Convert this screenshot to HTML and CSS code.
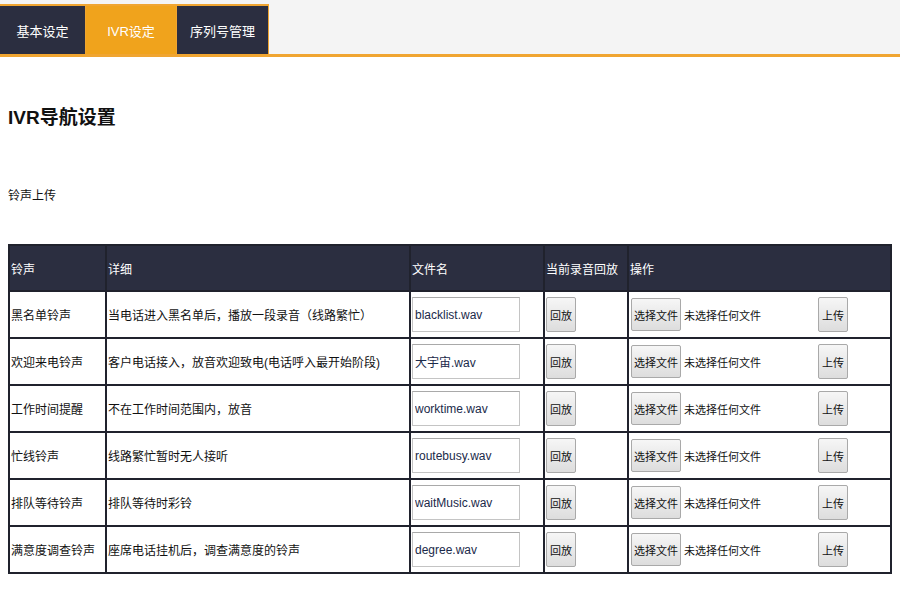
FILE: index.html
```html
<!DOCTYPE html>
<html lang="zh-CN">
<head>
    <meta charset="UTF-8">
    <title>IVR设定</title>
    <link rel="stylesheet" href="styles.css">
</head>
<body>

    <div class="tab-bar">
        <a class="tab">基本设定</a>
        <a class="tab active">IVR设定</a>
        <a class="tab">序列号管理</a>
    </div>

    <div class="content">
        <h1 class="page-title">IVR导航设置</h1>
        <h3 class="section-title">铃声上传</h3>

        <table class="ring-table">
            <thead>
                <tr>
                    <th class="col-name">铃声</th>
                    <th class="col-detail">详细</th>
                    <th class="col-file">文件名</th>
                    <th class="col-play">当前录音回放</th>
                    <th class="col-op">操作</th>
                </tr>
            </thead>
            <tbody>
                <tr>
                    <td>黑名单铃声</td>
                    <td>当电话进入黑名单后，播放一段录音（线路繁忙）</td>
                    <td><input class="file-name" type="text" value="blacklist.wav"></td>
                    <td><button class="btn">回放</button></td>
                    <td><div class="op"><span class="chooser"><button class="btn">选择文件</button><span class="no-file">未选择任何文件</span></span><button class="btn">上传</button></div></td>
                </tr>
                <tr>
                    <td>欢迎来电铃声</td>
                    <td>客户电话接入，放音欢迎致电(电话呼入最开始阶段)</td>
                    <td><input class="file-name" type="text" value="大宇宙.wav"></td>
                    <td><button class="btn">回放</button></td>
                    <td><div class="op"><span class="chooser"><button class="btn">选择文件</button><span class="no-file">未选择任何文件</span></span><button class="btn">上传</button></div></td>
                </tr>
                <tr>
                    <td>工作时间提醒</td>
                    <td>不在工作时间范围内，放音</td>
                    <td><input class="file-name" type="text" value="worktime.wav"></td>
                    <td><button class="btn">回放</button></td>
                    <td><div class="op"><span class="chooser"><button class="btn">选择文件</button><span class="no-file">未选择任何文件</span></span><button class="btn">上传</button></div></td>
                </tr>
                <tr>
                    <td>忙线铃声</td>
                    <td>线路繁忙暂时无人接听</td>
                    <td><input class="file-name" type="text" value="routebusy.wav"></td>
                    <td><button class="btn">回放</button></td>
                    <td><div class="op"><span class="chooser"><button class="btn">选择文件</button><span class="no-file">未选择任何文件</span></span><button class="btn">上传</button></div></td>
                </tr>
                <tr>
                    <td>排队等待铃声</td>
                    <td>排队等待时彩铃</td>
                    <td><input class="file-name" type="text" value="waitMusic.wav"></td>
                    <td><button class="btn">回放</button></td>
                    <td><div class="op"><span class="chooser"><button class="btn">选择文件</button><span class="no-file">未选择任何文件</span></span><button class="btn">上传</button></div></td>
                </tr>
                <tr>
                    <td>满意度调查铃声</td>
                    <td>座席电话挂机后，调查满意度的铃声</td>
                    <td><input class="file-name" type="text" value="degree.wav"></td>
                    <td><button class="btn">回放</button></td>
                    <td><div class="op"><span class="chooser"><button class="btn">选择文件</button><span class="no-file">未选择任何文件</span></span><button class="btn">上传</button></div></td>
                </tr>
            </tbody>
        </table>
    </div>

</body>
</html>
```

FILE: styles.css
```css
html, body {
    margin: 0;
}

body {
    font-family: 'Liberation Sans', 'Noto Sans CJK SC', sans-serif;
    background-color: #fff;
    color: #111;
}

.tab-bar {
    display: flex;
    align-items: flex-end;
    height: 54px;
    background-color: #f4f4f4;
    border-bottom: 3px solid #f0a531;
}

.tab {
    display: flex;
    align-items: center;
    justify-content: center;
    height: 50px;
    padding: 0;
    box-sizing: border-box;
    background-color: #2b2e40;
    color: #fff;
    font-size: 13px;
    white-space: nowrap;
    border-top: 2px solid #f0a531;
    border-right: 1px solid #f0a531;
}

.tab:nth-child(1) { width: 86px; }
.tab:nth-child(2) { width: 91px; }
.tab:nth-child(3) { width: 92px; }

.tab.active {
    background-color: #f0a31c;
}

.content {
    padding: 0 8px;
}

.page-title {
    margin: 42px 0 0;
    font-size: 19px;
    font-weight: bold;
    line-height: 38px;
    color: #111;
}

.section-title {
    margin: 49px 0 0;
    font-size: 12px;
    font-weight: normal;
    line-height: 20px;
    color: #111;
}

.ring-table {
    width: 884px;
    margin-top: 38px;
    border-collapse: collapse;
    table-layout: fixed;
    border-top: 1px solid #c8c8c8;
    font-size: 12px;
}

.ring-table th,
.ring-table td {
    border: 2px solid #20222d;
    padding: 0 1px;
    text-align: left;
    vertical-align: middle;
    color: #111;
    white-space: nowrap;
}

.ring-table th {
    height: 44px;
    background-color: #2b2e40;
    color: #fff;
    font-weight: normal;
    font-size: 12px;
}

.ring-table td {
    height: 45px;
}

.col-name { width: 93px; }
.col-detail { width: 300px; }
.col-file { width: 130px; }
.col-play { width: 80px; }

.file-name {
    width: 108px;
    height: 35px;
    box-sizing: border-box;
    border: 1px solid #c4c4c4;
    border-top-color: #a9a9a9;
    padding: 0 2px;
    font-family: 'Liberation Sans', 'Noto Sans CJK SC', sans-serif;
    font-size: 12px;
    color: #1b2a4a;
}

.btn {
    height: 35px;
    padding: 0 3px;
    border: 1px solid #a9a9a9;
    border-radius: 2px;
    background: linear-gradient(#f6f6f6, #dddddd);
    font-family: 'Liberation Sans', 'Noto Sans CJK SC', sans-serif;
    font-size: 11px;
    color: #111;
}

.op {
    display: flex;
    align-items: center;
    padding-left: 1px;
}

.op .chooser {
    display: flex;
    align-items: center;
    width: 187px;
}

.op .chooser .btn {
    height: 33px;
    padding: 0 2px;
}

.no-file {
    margin-left: 3px;
    font-size: 11px;
}
```
